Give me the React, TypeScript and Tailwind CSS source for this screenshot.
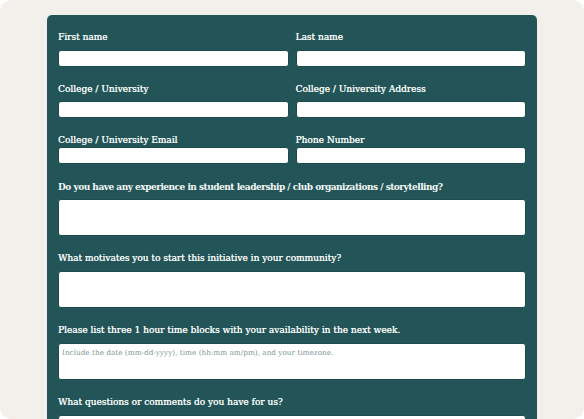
import React from "react";

const serif = { fontFamily: '"DejaVu Serif", "Liberation Serif", serif' };

const Label = ({ text, bold, mb }: { text: string; bold?: boolean; mb: string }) => (
  <p
    className={`text-[9px] leading-[14px] text-[#f4f7f6] ${
      bold ? "font-bold tracking-[-0.5px]" : "[text-shadow:0.15px_0_0_#f4f7f6]"
    } ${mb}`}
  >
    {text}
  </p>
);

const Input = () => <div className="h-[17px] rounded-[3px] bg-white border border-[#1c4a4d]" />;

const Area = ({ placeholder }: { placeholder?: string }) => (
  <div className="h-[37px] rounded-[3px] bg-white border border-[#1c4a4d] px-[3px] pt-[4px]">
    {placeholder && (
      <p className="text-[7.3px] leading-[10px] text-[#7f9799]">{placeholder}</p>
    )}
  </div>
);

const App = () => {
  return (
    <div className="w-[584px] h-[419px] bg-white" style={serif}>
      <div className="w-full h-full rounded-[12px] bg-[#f3f0eb] overflow-hidden pt-[15px] pl-[47px] pr-[47px]">
        <div className="rounded-[5px] bg-[#235558] px-[11px] pt-[15px] pb-10 h-[500px]">
          <div className="grid grid-cols-2 gap-x-[7px]">
            <div>
              <Label text="First name" mb="mb-[6px]" />
              <Input />
            </div>
            <div>
              <Label text="Last name" mb="mb-[6px]" />
              <Input />
            </div>
            <div className="mt-[15px]">
              <Label text="College / University" mb="mb-[5px]" />
              <Input />
            </div>
            <div className="mt-[15px]">
              <Label text="College / University Address" mb="mb-[5px]" />
              <Input />
            </div>
            <div className="mt-[15px]">
              <Label text="College / University Email" mb="mb-0" />
              <Input />
            </div>
            <div className="mt-[15px]">
              <Label text="Phone Number" mb="mb-0" />
              <Input />
            </div>
          </div>
          <div className="mt-[16px]">
            <Label
              bold
              text="Do you have any experience in student leadership / club organizations / storytelling?"
              mb="mb-[5px]"
            />
            <Area />
          </div>
          <div className="mt-[15px]">
            <Label text="What motivates you to start this initiative in your community?" mb="mb-[6px]" />
            <Area />
          </div>
          <div className="mt-[15px]">
            <Label
              text="Please list three 1 hour time blocks with your availability in the next week."
              mb="mb-[6px]"
            />
            <Area placeholder="Include the date (mm-dd-yyyy), time (hh:mm am/pm), and your timezone." />
          </div>
          <div className="mt-[15px]">
            <Label text="What questions or comments do you have for us?" mb="mb-[6px]" />
            <Area />
          </div>
        </div>
      </div>
    </div>
  );
};

export default App;
